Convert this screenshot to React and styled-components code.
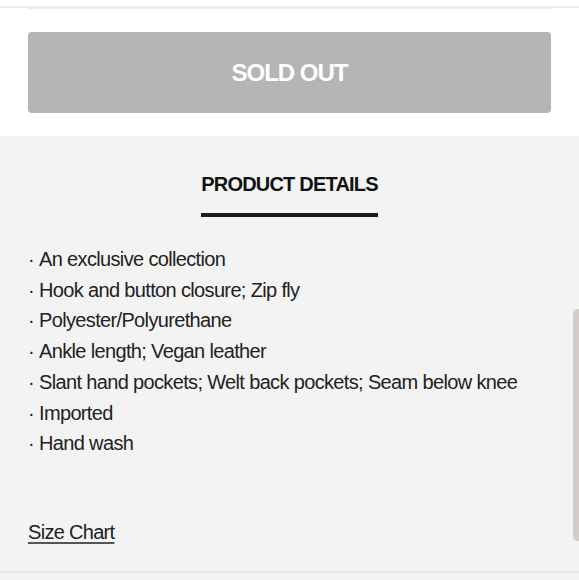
import React from "react";
import styled, { createGlobalStyle } from "styled-components";

const Global = createGlobalStyle`
  html, body { margin: 0; padding: 0; background: #ffffff; }
  body { font-family: "Liberation Sans", Arial, sans-serif; overflow: hidden; }
`;

const Page = styled.div`
  width: 579px;
  height: 580px;
  position: relative;
  overflow: hidden;
  background: #f3f3f3;
`;

const TopSection = styled.section`
  background: #ffffff;
  padding: 6px 0 23px;
`;

const OuterRule = styled.div`
  height: 2px;
  background: #ebebeb;
`;

const InnerRule = styled.div`
  height: 1px;
  margin: 0 28px 0 28px;
  background: #ececec;
`;

const SoldOutButton = styled.button`
  display: flex;
  align-items: center;
  justify-content: center;
  box-sizing: border-box;
  width: calc(100% - 56px);
  height: 81px;
  margin: 23px 28px 0;
  padding: 0;
  border: none;
  border-radius: 4px;
  background: #b5b5b5;
  color: #ffffff;
  font-family: "Liberation Sans", Arial, sans-serif;
  font-weight: 700;
  font-size: 24px;
  letter-spacing: -1px;
  cursor: default;
`;

const DetailsSection = styled.section`
  background: #f3f3f3;
  padding: 36px 28px 0;
  height: 437px;
  box-sizing: border-box;
  border-bottom: 2px solid #e5e5e5;
`;

const Heading = styled.h2`
  display: table;
  margin: 0 auto;
  padding-bottom: 17px;
  border-bottom: 4px solid #1a1a22;
  font-size: 20px;
  line-height: 24px;
  font-weight: 700;
  letter-spacing: -0.8px;
  color: #111111;
`;

const List = styled.ul`
  list-style: none;
  margin: 27px 0 0;
  padding: 0;
`;

const Item = styled.li`
  font-size: 20px;
  line-height: 30.7px;
  letter-spacing: -0.65px;
  color: #222222;
  &::before {
    content: "·";
    display: inline-block;
    width: 11px;
  }
`;

const SizeChart = styled.a`
  display: inline-block;
  margin-top: 61px;
  font-size: 20px;
  line-height: 24px;
  letter-spacing: -0.7px;
  color: #222222;
  text-decoration: underline;
  text-underline-offset: 3px;
  text-decoration-color: #555;
  cursor: pointer;
`;

const EdgeTab = styled.div`
  position: absolute;
  right: -10px;
  top: 309px;
  width: 16px;
  height: 232px;
  border-radius: 5px;
  background: #d4ccc8;
`;

const items = [
  "An exclusive collection",
  "Hook and button closure; Zip fly",
  "Polyester/Polyurethane",
  "Ankle length; Vegan leather",
  "Slant hand pockets; Welt back pockets; Seam below knee",
  "Imported",
  "Hand wash",
];

export default function App() {
  return (
    <Page>
      <Global />
      <TopSection>
        <OuterRule />
        <InnerRule />
        <SoldOutButton>SOLD OUT</SoldOutButton>
      </TopSection>
      <DetailsSection>
        <Heading>PRODUCT DETAILS</Heading>
        <List>
          {items.map((t) => (
            <Item key={t}>{t}</Item>
          ))}
        </List>
        <SizeChart>Size Chart</SizeChart>
      </DetailsSection>
      <EdgeTab />
    </Page>
  );
}
